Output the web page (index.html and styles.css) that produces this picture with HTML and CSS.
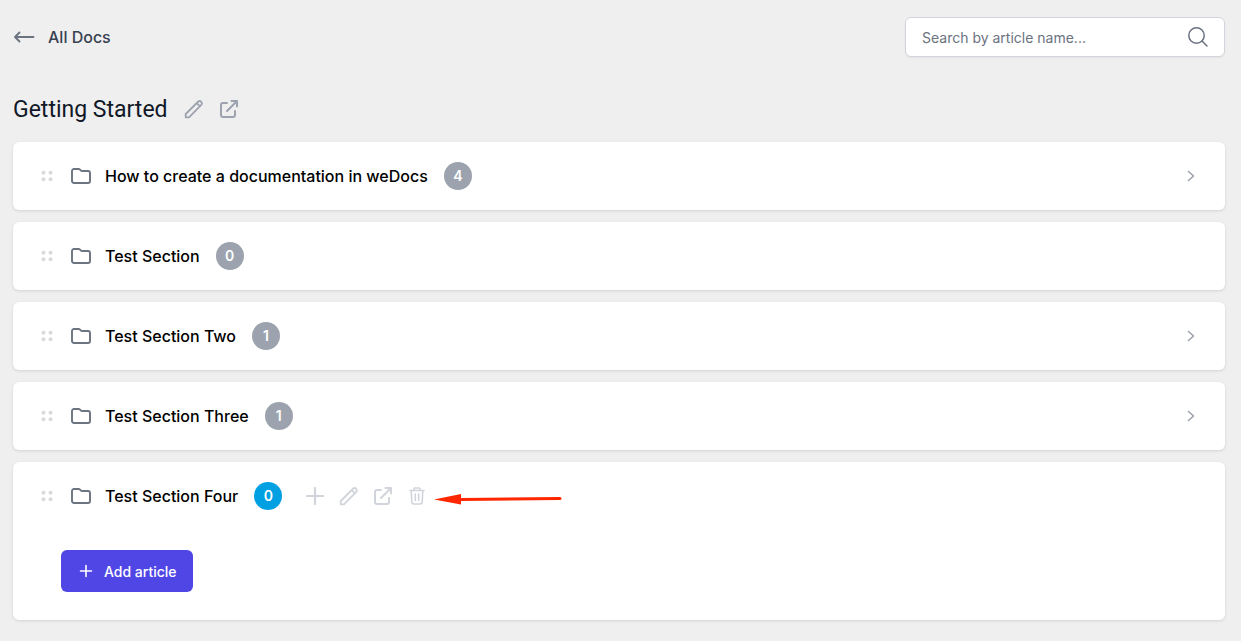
FILE: index.html
```html
<!DOCTYPE html>
<html lang="en">
<head>
  <meta charset="UTF-8" />
  <meta name="viewport" content="width=device-width, initial-scale=1.0"/>
  <title>Getting Started</title>
  <link rel="stylesheet" href="styles.css">
</head>
<body>
  <!-- shared icons -->
  <svg class="sprite" aria-hidden="true">
    <symbol id="dots" viewBox="0 0 12 12">
      <circle cx="2.5" cy="2.7" r="2"/><circle cx="9.5" cy="2.7" r="2"/>
      <circle cx="2.5" cy="9.3" r="2"/><circle cx="9.5" cy="9.3" r="2"/>
    </symbol>
    <symbol id="folder" viewBox="0 0 20 16">
      <path d="M1 13V3a2 2 0 0 1 2-2h4.6a2 2 0 0 1 1.4.6l.8.8a2 2 0 0 0 1.4.6H17a2 2 0 0 1 2 2v8a2 2 0 0 1-2 2H3a2 2 0 0 1-2-2z" stroke-width="1.9"/>
    </symbol>
    <symbol id="pencil" viewBox="0 0 20 20">
      <path d="M12.8 4.2l3.2 3.200M14.300 2.500a2.300 2.300 0 0 1 3.200 3.200L5 18.300H1.700V15z" stroke-width="1.8"/>
    </symbol>
    <symbol id="external" viewBox="0 0 18 18">
      <path d="M7 3H3a2 2 0 0 0-2 2v10a2 2 0 0 0 2 2h10a2 2 0 0 0 2-2v-4M11.500 1H17v5.500M17 1L7 11" stroke-width="2"/>
    </symbol>
    <symbol id="trash" viewBox="0 0 20 18">
      <path d="M3 3.500h14M4.200 3.500l.6 11.700a2 2 0 0 0 2 1.800h6.400a2 2 0 0 0 2-1.800l.6-11.700M7 3.500V2a1 1 0 0 1 1-1h4a1 1 0 0 1 1 1v1.500M8.300 7v6.500M11.700 7v6.500" stroke-width="1.6"/>
    </symbol>
    <symbol id="plus" viewBox="0 0 18 18">
      <path d="M9 1v16M1 9h16" stroke-width="2.200"/>
    </symbol>
    <symbol id="chevron" viewBox="0 0 8 12">
      <path d="M1.500 1.500L6.500 6l-5 4.500" stroke-width="1.6"/>
    </symbol>
  </svg>

  <header class="topbar">
    <a class="back" href="#">
      <svg class="icon" width="22" height="12" viewBox="0 0 22 12"><path d="M6.500 1.500L2 6L6.500 10.500M2 6H20.500" stroke-width="1.9"/></svg>
      All Docs
    </a>
    <form class="search">
      <input type="search" aria-label="Search articles" placeholder="Search by article name...">
      <button type="submit" aria-label="Search">
        <svg class="icon" width="20" height="20" viewBox="0 0 20 20"><circle cx="8.500" cy="8.500" r="7.700" stroke-width="1.500"/><path d="M14 14l5 5" stroke-width="1.500"/></svg>
      </button>
    </form>
  </header>

  <main>
    <div class="heading">
      <h1>Getting Started</h1>
      <button class="icon-btn" aria-label="Edit"><svg class="icon" width="20" height="20"><use href="#pencil"/></svg></button>
      <a class="icon-btn" href="#" aria-label="Open"><svg class="icon" width="18" height="18"><use href="#external"/></svg></a>
    </div>

    <ul class="sections">
      <li class="section">
        <div class="row">
          <svg class="drag" width="12" height="12"><use href="#dots"/></svg>
          <svg class="icon folder" width="20" height="16"><use href="#folder"/></svg>
          <h2>How to create a documentation in weDocs</h2>
          <span class="count">4</span>
          <button class="icon-btn toggle" aria-label="Expand"><svg class="icon" width="8" height="12"><use href="#chevron"/></svg></button>
        </div>
      </li>
      <li class="section">
        <div class="row">
          <svg class="drag" width="12" height="12"><use href="#dots"/></svg>
          <svg class="icon folder" width="20" height="16"><use href="#folder"/></svg>
          <h2>Test Section</h2>
          <span class="count">0</span>
        </div>
      </li>
      <li class="section">
        <div class="row">
          <svg class="drag" width="12" height="12"><use href="#dots"/></svg>
          <svg class="icon folder" width="20" height="16"><use href="#folder"/></svg>
          <h2>Test Section Two</h2>
          <span class="count">1</span>
          <button class="icon-btn toggle" aria-label="Expand"><svg class="icon" width="8" height="12"><use href="#chevron"/></svg></button>
        </div>
      </li>
      <li class="section">
        <div class="row">
          <svg class="drag" width="12" height="12"><use href="#dots"/></svg>
          <svg class="icon folder" width="20" height="16"><use href="#folder"/></svg>
          <h2>Test Section Three</h2>
          <span class="count">1</span>
          <button class="icon-btn toggle" aria-label="Expand"><svg class="icon" width="8" height="12"><use href="#chevron"/></svg></button>
        </div>
      </li>
      <li class="section">
        <div class="row">
          <svg class="drag" width="12" height="12"><use href="#dots"/></svg>
          <svg class="icon folder" width="20" height="16"><use href="#folder"/></svg>
          <h2>Test Section Four</h2>
          <span class="count active">0</span>
          <div class="actions">
            <button class="icon-btn" aria-label="Add"><svg class="icon" width="18" height="18"><use href="#plus"/></svg></button>
            <button class="icon-btn" aria-label="Edit"><svg class="icon" width="20" height="20"><use href="#pencil"/></svg></button>
            <a class="icon-btn" href="#" aria-label="Open"><svg class="icon" width="18" height="18"><use href="#external"/></svg></a>
            <button class="icon-btn" aria-label="Delete"><svg class="icon" width="20" height="18"><use href="#trash"/></svg></button>
          </div>
          <svg class="pointer" width="128" height="20" viewBox="0 0 128 20"><path d="M0 13.500L27 8v4l99-1a1.500 1.500 0 0 1 0 3l-99 1v3.500z"/></svg>
        </div>
        <div class="section-body">
          <button class="add-btn">
            <svg class="icon" width="14" height="14" viewBox="0 0 14 14"><path d="M7 1.500v11M1.500 7h11" stroke-width="1.600"/></svg>
            Add article
          </button>
        </div>
      </li>
    </ul>
  </main>
</body>
</html>
```

FILE: styles.css
```css
* {
  box-sizing: border-box;
}
body {
  font-family: Inter, "Liberation Sans", sans-serif;
  background-color: #efefef;
  color: #000;
  margin: 0;
  padding: 17px 16px 20px 13px;
}
h1, h2, ul {
  margin: 0;
  padding: 0;
}
button {
  font-family: inherit;
  border: none;
  background: none;
  padding: 0;
  cursor: pointer;
}
svg {
  display: block;
  flex-shrink: 0;
}
.sprite {
  position: absolute;
  width: 0;
  height: 0;
}
.icon {
  fill: none;
  stroke: currentColor;
  stroke-linecap: round;
  stroke-linejoin: round;
}
.icon-btn {
  display: flex;
  color: #9ca3af;
}
.topbar {
  display: flex;
  justify-content: space-between;
  align-items: center;
}
.back {
  display: flex;
  align-items: center;
  gap: 13px;
  color: #374151;
  font-size: 16px;
  font-weight: 500;
  text-decoration: none;
}
.back .icon {
  color: #6b7280;
}
.search {
  display: flex;
  align-items: center;
  width: 320px;
  height: 40px;
  padding: 0 16px;
  background: #fff;
  border: 1px solid #d1d5db;
  border-radius: 6px;
  box-shadow: 0 1px 2px rgba(0, 0, 0, 0.05);
}
.search input {
  flex: 1;
  min-width: 0;
  border: none;
  outline: none;
  padding: 0;
  background: none;
  font-family: inherit;
  font-size: 14px;
}
.search input::placeholder {
  color: #6b7280;
}
.search button {
  color: #6b7280;
}
.heading {
  display: flex;
  align-items: center;
  gap: 16px;
  margin-top: 36px;
  height: 32px;
}
.heading h1 {
  color: #111827;
  font-family: Roboto, sans-serif;
  font-size: 23px;
  font-weight: 400;
}
.sections {
  display: flex;
  flex-direction: column;
  gap: 12px;
  margin-top: 17px;
  list-style: none;
}
.section {
  background: #fff;
  border-radius: 6px;
  box-shadow: 0 1px 3px rgba(0, 0, 0, 0.12);
}
.row {
  display: flex;
  align-items: center;
  padding: 20px 30px 20px 28px;
}
.drag {
  fill: #d9d9d9;
}
.folder {
  color: #6b7280;
  margin: 0 14px 0 18px;
}
.row h2 {
  font-size: 16px;
  font-weight: 500;
  line-height: 24px;
}
.count {
  width: 28px;
  height: 28px;
  margin-left: 16px;
  border-radius: 50%;
  background: #9ca3af;
  color: #fff;
  font-size: 14px;
  font-weight: 600;
  line-height: 28px;
  text-align: center;
}
.count.active {
  background: #00a0e3;
}
.toggle {
  margin-left: auto;
}
.actions {
  display: flex;
  align-items: center;
  gap: 15px;
  margin-left: 24px;
}
.actions .icon-btn {
  color: #d1d5db;
}
.pointer {
  fill: #ff2600;
  margin-left: 7px;
}
.section-body {
  padding: 20px 48px 28px;
}
.add-btn {
  display: flex;
  align-items: center;
  gap: 11px;
  height: 42px;
  padding: 0 16px 0 18px;
  border-radius: 6px;
  background: #4f46e5;
  color: #fff;
  font-size: 14px;
  font-weight: 500;
}
```
